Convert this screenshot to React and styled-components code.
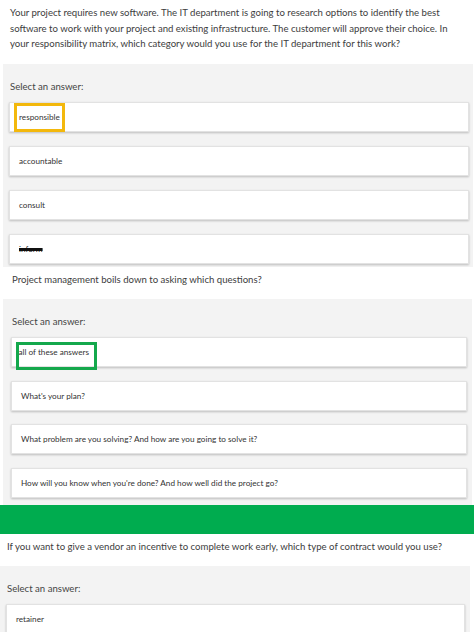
import * as React from 'react';
import styled, { createGlobalStyle } from 'styled-components';

const GlobalStyle = createGlobalStyle`
  html, body {
    margin: 0;
    padding: 0;
    background: #ffffff;
  }
  body {
    font-family: Lato, "Liberation Sans", sans-serif;
    color: #3b3b3b;
    overflow: hidden;
  }
`;

const questions = [
  {
    text: 'Your project requires new software. The IT department is going to research options to identify the best software to work with your project and existing infrastructure. The customer will approve their choice. In your responsibility matrix, which category would you use for the IT department for this work?',
    textLeft: 10,
    panel: { left: 3, right: 1, padLeft: 6, padRight: 4, padBottom: 3, gap: 14 },
    answers: [
      { label: 'responsible', mark: { color: '#f3b80c', left: 4, top: 0, width: 51, height: 29 } },
      { label: 'accountable' },
      { label: 'consult' },
      { label: 'inform', scribbled: true },
    ],
  },
  {
    text: 'Project management boils down to asking which questions?',
    textLeft: 12,
    panel: { left: 3, right: 2, padLeft: 8, padRight: 5, padBottom: 7, gap: 13.5 },
    answers: [
      { label: 'all of these answers', tight: true, mark: { color: '#14a84c', left: 4, top: 4, width: 81, height: 28 } },
      { label: "What's your plan?" },
      { label: 'What problem are you solving? And how are you going to solve it?' },
      { label: "How will you know when you're done? And how well did the project go?" },
    ],
  },
  {
    text: 'If you want to give a vendor an incentive to complete work early, which type of contract would you use?',
    textLeft: 7,
    divider: true,
    panel: { left: 0, right: 4, padLeft: 6, padRight: 5, padBottom: 7, gap: 14 },
    answers: [
      { label: 'retainer' },
    ],
  },
];

export default function App() {
  return (
    <Page>
      <GlobalStyle />
      {questions.map((q, i) => (
        <Section key={i}>
          {q.divider && <Divider />}
          <Question $left={q.textLeft}>{q.text}</Question>
          <Panel
            $left={q.panel.left}
            $right={q.panel.right}
            $padLeft={q.panel.padLeft}
            $padRight={q.panel.padRight}
            $padBottom={q.panel.padBottom}
          >
            <Prompt $left={q.textLeft - q.panel.left - q.panel.padLeft}>Select an answer:</Prompt>
            <AnswerList $gap={q.panel.gap}>
              {q.answers.map((a) => (
                <Answer key={a.label} $tight={a.tight}>
                  {a.scribbled ? <Scribbled>{a.label}</Scribbled> : a.label}
                  {a.mark && (
                    <Mark
                      $color={a.mark.color}
                      style={{
                        left: a.mark.left,
                        top: a.mark.top,
                        width: a.mark.width,
                        height: a.mark.height,
                      }}
                    />
                  )}
                </Answer>
              ))}
            </AnswerList>
          </Panel>
        </Section>
      ))}
    </Page>
  );
}

const Page = styled.div`
  width: 474px;
  display: flex;
  flex-direction: column;
`;

const Section = styled.section`
  display: flex;
  flex-direction: column;
`;

const Divider = styled.div`
  height: 29px;
  background: #00ac4f;
`;

const Question = styled.p`
  margin: 0;
  padding: 5px 14px 12px ${(p) => p.$left}px;
  font-size: 9.6px;
  line-height: 15.5px;
  color: #3d3d3d;
`;

const Panel = styled.div`
  margin: 0 ${(p) => p.$right}px 0 ${(p) => p.$left}px;
  padding: 15px ${(p) => p.$padRight}px ${(p) => p.$padBottom}px ${(p) => p.$padLeft}px;
  background: #f3f3f3;
  display: flex;
  flex-direction: column;
  gap: 8px;
`;

const Prompt = styled.div`
  padding-left: ${(p) => p.$left}px;
  font-size: 9.6px;
  line-height: 15px;
  color: #444444;
`;

const AnswerList = styled.div`
  display: flex;
  flex-direction: column;
  gap: ${(p) => p.$gap}px;
`;

const Answer = styled.div`
  position: relative;
  height: 30px;
  box-sizing: border-box;
  display: flex;
  align-items: center;
  padding-left: ${(p) => (p.$tight ? 6.5 : 9)}px;
  background: #ffffff;
  border: 1px solid #e2e2e2;
  box-shadow: 0 1px 2px rgba(0, 0, 0, 0.22);
  font-size: 8.2px;
  color: #333333;
`;

const Scribbled = styled.span`
  color: #222222;
  text-decoration: line-through;
  text-decoration-thickness: 3px;
  text-decoration-color: #111111;
`;

const Mark = styled.span`
  position: absolute;
  box-sizing: border-box;
  border: 3px solid ${(p) => p.$color};
  pointer-events: none;
`;
